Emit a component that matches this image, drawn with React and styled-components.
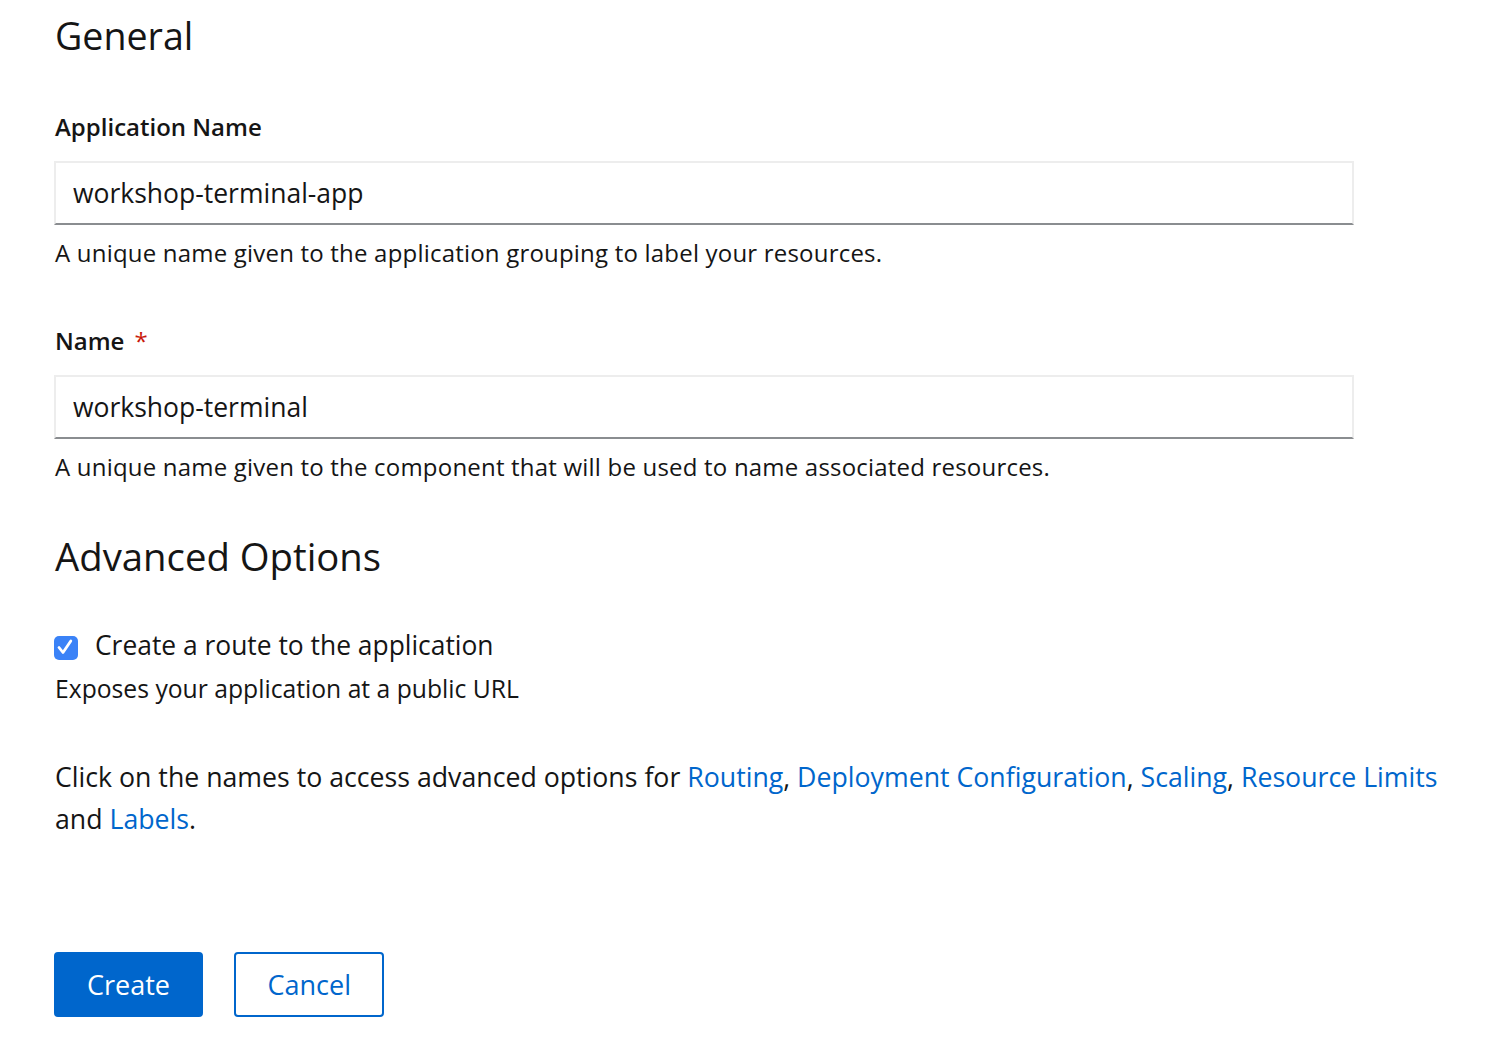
import React from "react";
import styled, { createGlobalStyle } from "styled-components";

const Global = createGlobalStyle`
  html, body { margin: 0; padding: 0; background: #fff; }
  body { font-family: "Open Sans", "Liberation Sans", sans-serif; color: #151515; }
`;

const Page = styled.div`
  padding: 14px 0 0 55px;
  width: 1299px;
`;

const Heading = styled.h2`
  margin: ${(p) => p.$mt || 0}px 0 0;
  font-size: ${(p) => p.$size || 36}px;
  line-height: ${(p) => p.$lh || 44}px;
  font-weight: 400;
`;

const Field = styled.div`
  display: flex;
  flex-direction: column;
  margin-top: ${(p) => p.$mt}px;
`;

const Label = styled.label`
  font-size: 24px;
  line-height: 30px;
  font-weight: 600;
  display: flex;
  gap: 10px;
`;

const Required = styled.span`
  color: #c9190b;
  font-weight: 400;
`;

const Input = styled.input`
  margin: 19px 0 0 -1px;
  box-sizing: border-box;
  height: 64px;
  width: 1300px;
  border: 2px solid #ededed;
  border-bottom-color: #8a8d90;
  padding: 0 17px;
  font-family: inherit;
  font-size: 26.5px;
  color: #151515;
  outline: none;
  background: #fff;
`;

const Helper = styled.div`
  margin-top: 13px;
  font-size: 24px;
  line-height: 30px;
  letter-spacing: 0.2px;
`;

const CheckRow = styled.label`
  display: flex;
  align-items: center;
  gap: 17px;
  margin-top: 49px;
  font-size: 26.4px;
  line-height: 34px;
`;

const Box = styled.span`
  width: 24px;
  height: 24px;
  margin-left: -1px;
  margin-top: 6px;
  border-radius: 5px;
  background: #3a82f7;
  display: flex;
  align-items: center;
  justify-content: center;
`;

const Sub = styled.div`
  margin-top: 12px;
  font-size: 24.7px;
  line-height: 30px;
`;

const Para = styled.p`
  margin: 52px 0 0;
  font-size: 26.7px;
  line-height: 42px;
  width: 1400px;
`;

const Link = styled.a`
  color: #0066cc;
  text-decoration: none;
`;

const Actions = styled.div`
  display: flex;
  gap: 31px;
  margin-top: 112px;
  margin-left: -1px;
`;

const Button = styled.button`
  box-sizing: border-box;
  height: 65px;
  padding: 0 ${(p) => (p.$primary ? 31 : 31.5)}px;
  border-radius: 4px;
  font-family: inherit;
  font-size: 27px;
  background: ${(p) => (p.$primary ? "#0066cc" : "#fff")};
  color: ${(p) => (p.$primary ? "#fff" : "#0066cc")};
  border: 2px solid #0066cc;
  cursor: pointer;
`;

export default function App() {
  return (
    <>
      <Global />
      <Page>
        <Heading $size={37.6} $lh={44}>General</Heading>
        <Field $mt={54}>
          <Label>Application Name</Label>
          <Input defaultValue="workshop-terminal-app" />
          <Helper>A unique name given to the application grouping to label your resources.</Helper>
        </Field>
        <Field $mt={58}>
          <Label>
            Name <Required>*</Required>
          </Label>
          <Input defaultValue="workshop-terminal" />
          <Helper>A unique name given to the component that will be used to name associated resources.</Helper>
        </Field>
        <Heading $size={38.3} $lh={46} $mt={51}>Advanced Options</Heading>
        <CheckRow>
          <Box>
            <svg width="24" height="24" viewBox="0 0 24 24">
              <path d="M5 11.5 L9 16.5 L16.8 5" fill="none" stroke="#fff" strokeWidth="2.8" strokeLinecap="round" strokeLinejoin="round" />
            </svg>
          </Box>
          Create a route to the application
        </CheckRow>
        <Sub>Exposes your application at a public URL</Sub>
        <Para>
          Click on the names to access advanced options for <Link>Routing</Link>, <Link>Deployment Configuration</Link>, <Link>Scaling</Link>, <Link>Resource Limits</Link> and <Link>Labels</Link>.
        </Para>
        <Actions>
          <Button $primary>Create</Button>
          <Button>Cancel</Button>
        </Actions>
      </Page>
    </>
  );
}
